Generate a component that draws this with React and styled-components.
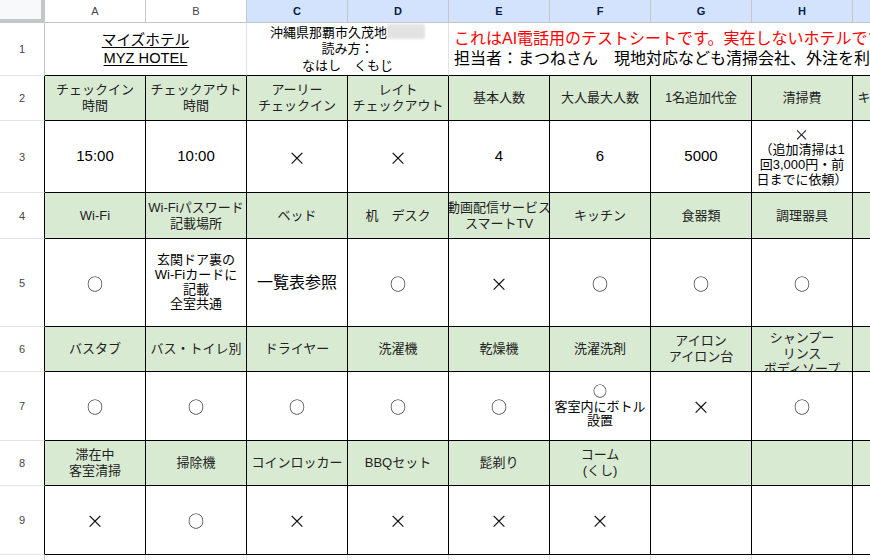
import React from 'react';
import styled, { createGlobalStyle } from 'styled-components';

const GlobalStyle = createGlobalStyle`
  html, body {
    margin: 0;
    padding: 0;
    background: #fff;
    overflow: hidden;
  }
  body {
    font-family: 'Liberation Sans', 'Noto Sans CJK JP', sans-serif;
    color: #000;
  }
`;

const GRID = '#e2e3e3';
const HEAD_LINE = '#c4c7c5';
const INK = '#000';

const Sheet = styled.div`
  display: grid;
  grid-template-columns: 45px repeat(9, 101px);
  grid-template-rows: 23px 53px 45px 72px 46px 88px 45px 69px 45px 69px 40px;
  width: 954px;
`;

const Corner = styled.div`
  box-sizing: border-box;
  background: #f8f9fa;
  border-right: 4px solid ${HEAD_LINE};
  border-bottom: 4px solid ${HEAD_LINE};
`;

const ColHead = styled.div`
  box-sizing: border-box;
  display: flex;
  align-items: center;
  justify-content: center;
  font-size: 11px;
  background: ${p => (p.$selected ? '#d3e3fd' : '#fff')};
  color: ${p => (p.$selected ? '#041e49' : '#444746')};
  font-weight: ${p => (p.$selected ? 700 : 400)};
  border-right: 1px solid ${HEAD_LINE};
  border-bottom: 1px solid ${HEAD_LINE};
`;

const RowHead = styled.div`
  box-sizing: border-box;
  display: flex;
  align-items: center;
  justify-content: center;
  font-size: 11px;
  color: #444746;
  background: #fff;
  border-right: 1px solid ${p => (p.$table ? INK : HEAD_LINE)};
  border-bottom: 1px solid ${GRID};
`;

const Cell = styled.div`
  box-sizing: border-box;
  display: flex;
  align-items: ${p => (p.$top ? 'flex-start' : 'center')};
  justify-content: center;
  overflow: hidden;
  padding-top: ${p => (p.$top ? '3px' : '0')};
  white-space: nowrap;
  text-align: center;
  font-size: ${p => (p.$head || p.$small ? '13px' : '15px')};
  line-height: ${p => (p.$head ? 1.2 : 1.12)};
  color: ${p => (p.$head ? '#222' : '#000')};
  background: ${p => (p.$head ? '#d9ead3' : '#fff')};
  border-right: 1px solid ${INK};
  border-bottom: 1px solid ${INK};
  grid-column: ${p => (p.$span ? `span ${p.$span}` : 'auto')};
`;

const BlankCell = styled.div`
  box-sizing: border-box;
  border-right: 1px solid ${GRID};
  border-bottom: 1px solid ${p => (p.$edge ? INK : GRID)};
  grid-column: ${p => (p.$span ? `span ${p.$span}` : 'auto')};
`;

const TitleCell = styled(BlankCell)`
  display: flex;
  align-items: center;
  justify-content: center;
  text-align: center;
  font-size: 14.67px;
  line-height: 18px;
  text-decoration: underline;
  text-underline-offset: 2px;
  color: #000;
`;

const AddressCell = styled(BlankCell)`
  display: flex;
  align-items: center;
  justify-content: center;
  text-align: center;
  font-size: 13px;
  line-height: 16.5px;
  color: #000;
`;

const NoteCell = styled(BlankCell)`
  display: flex;
  flex-direction: column;
  justify-content: center;
  padding-left: 5px;
  font-size: 16px;
  line-height: 20px;
  white-space: nowrap;
  overflow: hidden;
`;

const NoteLine = styled.span`
  color: ${p => p.$tone === 'alert' ? '#ff0000' : '#000'};
`;

const Redacted = styled.span`
  display: inline-block;
  width: 38px;
  height: 15px;
  vertical-align: -2px;
  background: #e3e3e3;
  border-radius: 2px;
  filter: blur(1px);
`;

// grayscale antialiasing keeps the thin rings from picking up colour fringes
const Mark = styled.span`
  display: inline-block;
  font-family: 'Noto Sans CJK JP', sans-serif;
  font-size: ${p => p.$size || 16}px;
  line-height: 1;
  color: #111;
  will-change: transform;
  -webkit-font-smoothing: antialiased;
`;

const O = ({ size }) => <Mark $size={size}>○</Mark>;
const X = ({ size }) => <Mark $size={size || 18}>×</Mark>;

const lines = text => text.split('\n').map((t, i, all) => (
  <React.Fragment key={i}>
    {t}
    {i < all.length - 1 && <br />}
  </React.Fragment>
));

const cols = ['A', 'B', 'C', 'D', 'E', 'F', 'G', 'H', 'I'];

// each pair: green header row, then its value row
const table = [
  {
    head: ['チェックイン\n時間', 'チェックアウト\n時間', 'アーリー\nチェックイン', 'レイト\nチェックアウト', '基本人数', '大人最大人数', '1名追加代金', '清掃費', 'キャンセル規定'],
    data: [
      '15:00', '10:00', <X />, <X />, '4', '6', '5000',
      { small: true, node: <div><X size={15} /><br />{lines('（追加清掃は1\n回3,000円・前\n日までに依頼）')}</div> },
      '',
    ],
  },
  {
    head: ['Wi-Fi', 'Wi-Fiパスワード\n記載場所', 'ベッド', '机　デスク', '動画配信サービス\nスマートTV', 'キッチン', '食器類', '調理器具', ''],
    data: [
      <O />,
      { small: true, node: <div>{lines('玄関ドア裏の\nWi-Fiカードに\n記載\n全室共通')}</div> },
      <span style={{ fontSize: 16 }}>一覧表参照</span>,
      <O />, <X />, <O />, <O />, <O />, '',
    ],
  },
  {
    head: ['バスタブ', 'バス・トイレ別', 'ドライヤー', '洗濯機', '乾燥機', '洗濯洗剤', 'アイロン\nアイロン台', { top: true, text: 'シャンプー\nリンス\nボディソープ' }, ''],
    data: [
      <O />, <O />, <O />, <O />, <O />,
      { small: true, node: <div><O size={14} /><br />{lines('客室内にボトル\n設置')}</div> },
      <X />, <O />, '',
    ],
  },
  {
    head: ['滞在中\n客室清掃', '掃除機', 'コインロッカー', 'BBQセット', '髭剃り', 'コーム\n(くし)', '', '', ''],
    data: [<X />, <O />, <X />, <X />, <X />, <X />, '', '', ''],
  },
];

function HeadCell({ item }) {
  const text = typeof item === 'string' ? item : item.text;
  return (
    <Cell $head $top={item.top}>
      <div>{lines(text)}</div>
    </Cell>
  );
}

function DataCell({ item }) {
  if (item && item.node) {
    return <Cell $small={item.small}>{item.node}</Cell>;
  }
  return <Cell>{item}</Cell>;
}

export default function App() {
  let rowNo = 2;
  return (
    <>
      <GlobalStyle />
      <Sheet>
        <Corner />
        {cols.map((c, i) => (
          <ColHead key={c} $selected={i >= 2}>{c}</ColHead>
        ))}

        <RowHead>1</RowHead>
        <TitleCell $span={2} $edge>
          <div>マイズホテル<br />MYZ HOTEL</div>
        </TitleCell>
        <AddressCell $span={2} $edge>
          <div>沖縄県那覇市久茂地<Redacted /><br />読み方：<br />なはし　くもじ</div>
        </AddressCell>
        <NoteCell $span={5} $edge>
          <NoteLine $tone="alert">これはAI電話用のテストシートです。実在しないホテルです。</NoteLine>
          <NoteLine>担当者：まつねさん　現地対応なども清掃会社、外注を利用しています。</NoteLine>
        </NoteCell>

        {table.map((block, b) => (
          <React.Fragment key={b}>
            <RowHead $table>{rowNo++}</RowHead>
            {block.head.map((h, i) => <HeadCell key={`h${i}`} item={h} />)}
            <RowHead $table>{rowNo++}</RowHead>
            {block.data.map((d, i) => <DataCell key={`d${i}`} item={d} />)}
          </React.Fragment>
        ))}

        <RowHead>10</RowHead>
        {cols.map(c => <BlankCell key={`r10${c}`} />)}
      </Sheet>
    </>
  );
}
